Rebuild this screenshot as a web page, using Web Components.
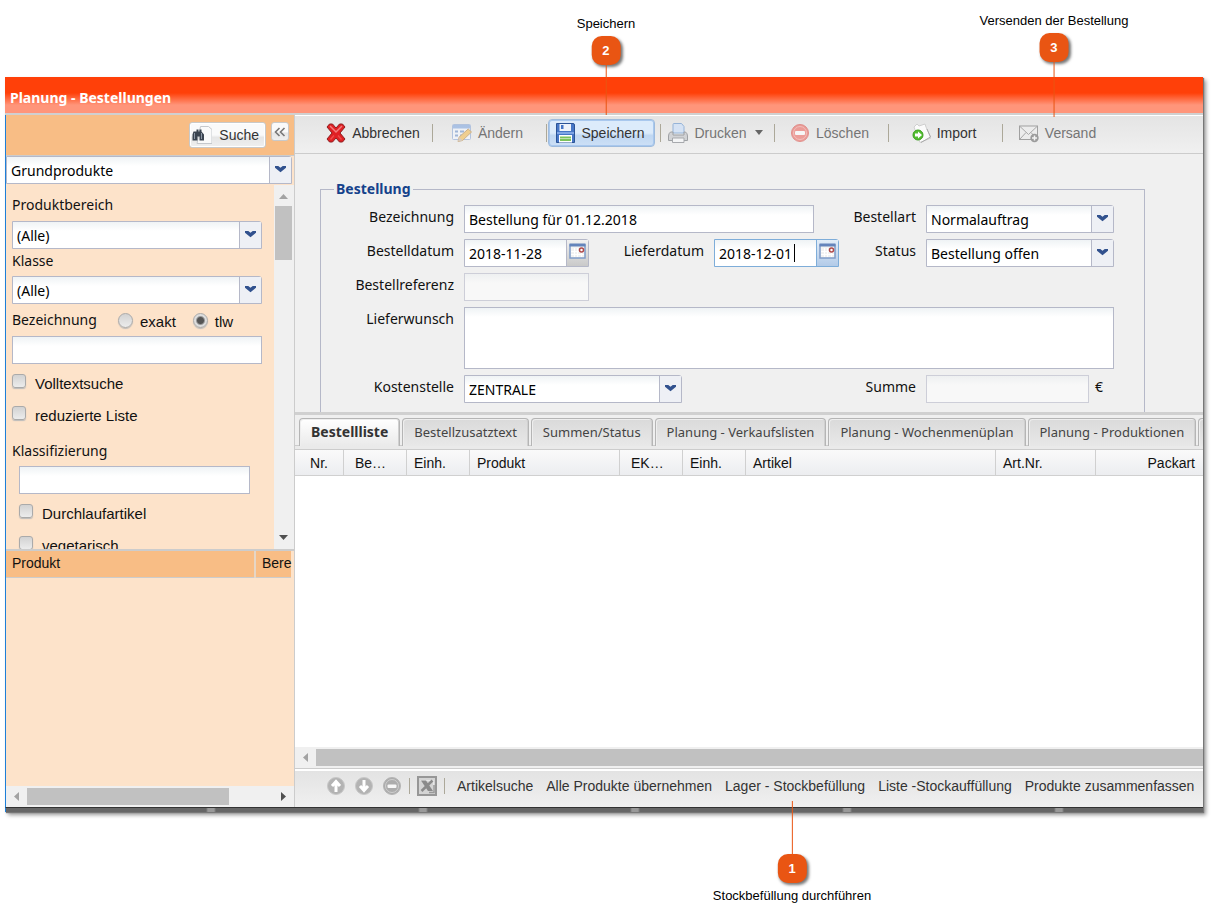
<!DOCTYPE html>
<html lang="de">
<head>
<meta charset="utf-8">
<title>Planung - Bestellungen</title>
<style>
body { margin: 0; background: #fff; font: 14px/20px "Liberation Sans", Arial, sans-serif; color: #111; }
</style>
</head>
<body>
<order-page></order-page>
<script>
const UI = '"Noto Sans", Tahoma, sans-serif';

const base = `
  *, *::before, *::after { box-sizing: border-box; }
  button { font: inherit; color: inherit; cursor: pointer; }
`;

const fields = `
  input[type=text], textarea, .combo, .date {
    width: 100%; height: 28px; margin: 0; border: 1px solid #b5b8c8; border-radius: 0; outline: 0;
    background: linear-gradient(#eff3f5, #fff 9px); color: #000; font: 14px/20px ${UI};
  }
  input[type=text], textarea { padding: 0 4px; display: block; resize: none; }
  input:disabled { border-color: #cdced8; background: linear-gradient(#eef0f1, #f8f8f8 9px); }
  .combo, .date { display: grid; grid-template-columns: 1fr 22px; border-top-right-radius: 3px; }
  .combo select {
    grid-area: 1 / 1 / 2 / 3; width: 100%; height: 26px; appearance: none; border: 0; outline: 0;
    background: none; margin: 0; padding: 1px 22px 0 4px; color: #000; font: inherit;
  }
  .combo svg, .date button {
    grid-area: 1 / 2; width: 22px; height: 26px; border-left: 1px solid #b5b8c8; background: #eef0f5;
    pointer-events: none;
  }
  .date { position: relative; }
  .date input[type=text] { border: 0; height: 26px; background: none; grid-area: 1 / 1; min-width: 0; }
  .date button { padding: 0; border-width: 0 0 0 1px; border-style: solid; background: linear-gradient(#f1f1f1, #c9c9c9); pointer-events: auto; }
  .date button svg { display: block; }
  .date.active, .date.active button { border-color: #7eadd9; }
  .date.active button { background: linear-gradient(#e2edf8, #b3cbe8); }
  .date.active::after { content: ""; position: absolute; left: 79px; top: 4px; width: 1px; height: 18px; background: #000; }
`;

const chevron = `<svg viewBox="0 0 21 26" aria-hidden="true"><path d="M5 9h3.300L10.500 10.800l2.200-1.800H16v1.700L10.500 15.300 5 10.700z" fill="#31518e"/></svg>`;
const combo = (id, value) => `<span class="combo"><select id="${id}"><option>${value}</option></select>${chevron}</span>`;
const calendar = `<svg width="21" height="26" viewBox="0 0 21 26" aria-hidden="true"><rect x="3" y="5" width="15" height="13" fill="#f2f2f2" stroke="#7f9cc9" stroke-width="1.5"/><path d="M2.500 3.500h16v3h-16z" fill="#6484bb"/><path d="M7.500 8v9M10.500 8v9M14.500 8v9M4 11.500h13M4 14.500h13" stroke="#fff"/><circle cx="14.500" cy="10" r="2" fill="#fff" stroke="#b04848" stroke-width="1.500"/></svg>`;

const icons = {
  cancel: `<path d="M3.500 1h3L10 5 13.500 1h3l2.500 3-5 6 5 6-2.500 3h-3L10 15 6.500 19h-3L1 16l5-6-5-6z" fill="#e02024" stroke="#8d2022"/><path d="M4 3l6 6 6-6" stroke="#f47c7c" stroke-width="1.500" fill="none"/><path d="M4.500 16.500L8 12.500M15.500 16.500L12 12.500" stroke="#ee4a4a" stroke-width="1.500"/>`,
  edit: `<g opacity=".6"><rect x=".5" y="1.500" width="18" height="15" rx="1" fill="#f4f8ff" stroke="#8fabd8"/><path d="M1 2h17v3.500H1z" fill="#83a9e2"/><path d="M3 8.500h3M3 12.500h3M8 8.500h4M8 12.500h3" stroke="#6f93cc" stroke-width="2"/><path d="M6 18.500l1.200-4.500 9-8 3.300 3-9 8.500z" fill="#f3bd55" stroke="#b98c4c"/><path d="M6 18.500l1.200-4.500 3.300 3.500z" fill="#c8b8a8"/></g>`,
  save: `<path d="M1.500.500h16.500q1.500 0 1.500 1.500v17.500h-18z" fill="#4676c6" stroke="#2b5396"/><rect x="4.500" y="1" width="11.500" height="7" fill="#eef3fa"/><rect x="6" y="2" width="2.500" height="4" fill="#4676c6"/><rect x="2" y="9" width="17" height="2" fill="#7fa5e4"/><rect x="4" y="12" width="13" height="7.500" fill="#fff"/><path d="M5 14.500h11M5 17h11" stroke="#7cc35c" stroke-width="1.800"/>`,
  print: `<g opacity=".75"><path d="M5 10V1.500Q5 .500 6 .500h7.500L16 3.500V10z" fill="#cfe1f8" stroke="#7ba2d3"/><path d="M2.500 9h2.500v3h11V9h1.500q2 1.500 2 4v4.500h-19V13q0-2.500 2-4z" fill="#c9cbce" stroke="#85888d"/><path d="M4.500 15h11.500v4.500H4.500z" fill="#f6f7f9" stroke="#909398"/></g>`,
  remove: `<g opacity=".6"><circle cx="10" cy="10" r="8.500" fill="#ee6a63" stroke="#d9544e"/><circle cx="10" cy="10" r="6.500" fill="none" stroke="#f6a29c"/><rect x="5" y="8" width="10" height="4" rx="1" fill="#fff"/></g>`,
  importing: `<path d="M3 4l3-3 2 2 6-2 1 3 5 11-11 4.500z" fill="#fbfbfb" stroke="#cfcfcf"/><path d="M16 6l3.500 8-9.500 5.500" fill="none" stroke="#a9a9a9"/><circle cx="7" cy="12" r="5" fill="#53bf30" stroke="#3b9e1e"/><path d="M4 10.500h3v-2l4 3.500-4 3.500v-2H4z" fill="#fff"/>`,
  mail: `<rect x=".5" y="3" width="18" height="13.500" fill="#ececec" stroke="#a0a0a0"/><path d="M1 3.500l8.500 8 8.500-8M1 16l6-6.500M18 16l-6-6.500" fill="none" stroke="#a8a8a8"/><circle cx="15.500" cy="15" r="4.200" fill="#9b9b9b"/><path d="M15.500 12.500v5M13 15h5" stroke="#f2f2f2" stroke-width="1.500"/>`,
  up: `<circle cx="10" cy="10" r="8.500" fill="#b3b3b3" stroke="#c8c8c8"/><path d="M10 16V6M6 10l4-4.500 4 4.500" fill="none" stroke="#fff" stroke-width="3"/>`,
  down: `<circle cx="10" cy="10" r="8.500" fill="#b3b3b3" stroke="#c8c8c8"/><path d="M10 4V14M6 10l4 4.500 4-4.500" fill="none" stroke="#fff" stroke-width="3"/>`,
  minus: `<circle cx="10" cy="10" r="8.500" fill="#acacac" stroke="#b5b5b5"/><circle cx="10" cy="10" r="6.500" fill="none" stroke="#cfcfcf"/><rect x="5.500" y="8.500" width="9" height="3.500" rx="1" fill="#f7f7f7"/>`,
  excel: `<rect x="1" y="1" width="18" height="18" fill="#d4d4d4" stroke="#979797" stroke-width="2"/><path d="M3.500 4.500h13v11.500" fill="none" stroke="#e8e8e8"/><path d="M4 4.500h5l7 10.500h-5z" fill="#8a8a8a"/><path d="M15.500 4.500L4.500 15" stroke="#8a8a8a" stroke-width="2.500"/><path d="M12 16.500h5V9" fill="none" stroke="#999" stroke-width="1.500"/>`,
  find: `<path d="M8.500 1.500h8l3.500 3v14H5z" fill="#fafafa" stroke="#c5c8cc"/><path d="M1.500 6.500h3V4.500h2v2h1v-2h2v2l2.500 3v6H7.500v-4h-2v4H.500v-6z" fill="#3b4450"/><path d="M2.500 8v6M9.500 8v6" stroke="#8d97a5"/>`
};

function define(name, render) {
  customElements.define(name, class extends HTMLElement {
    constructor() { super(); this.attachShadow({ mode: 'open' }); }
    connectedCallback() {
      const t = document.createElement('template');
      t.innerHTML = render(this);
      this.shadowRoot.replaceChildren(t.content.cloneNode(true));
    }
  });
}

define('ui-icon', el => `<style>
  :host { display: block; flex: none; width: 20px; height: 20px; }
  svg { display: block; width: 100%; height: 100%; }
</style><svg viewBox="0 0 20 20" aria-hidden="true">${icons[el.getAttribute('name')]}</svg>`);

define('tool-button', el => `<style>${base}
  :host { display: block; color: #333; }
  :host([muted]) { color: #757575; }
  button { display: flex; align-items: center; gap: 6px; height: 28px; padding: 0; border: 1px solid transparent; border-radius: 4px; background: none; white-space: nowrap; }
  :host([active]) button { padding: 0 9px 0 6px; border-color: #9ebbdd; box-shadow: inset 0 0 0 1px #a9c8ee; background: linear-gradient(#dcebfb 50%, #c0d7f2 60%, #cde0f6); }
  .caret { border: 4px solid transparent; border-top: 5px solid #666; border-bottom: 0; margin-left: 2px; }
</style><button type="button"${el.hasAttribute('only') ? ` aria-label="${el.getAttribute('only')}"` : ''}>
  ${el.hasAttribute('icon') ? `<ui-icon name="${el.getAttribute('icon')}"></ui-icon>` : ''}<slot></slot>${el.hasAttribute('menu') ? '<span class="caret"></span>' : ''}</button>`);

define('scroll-strip', el => `<style>${base}
  :host { display: flex; align-items: center; box-sizing: border-box; background: #f0f0f0; height: 21px; padding: 2px 0; }
  :host([vertical]) { flex-direction: column; height: auto; padding: 0 2px 0 1px; }
  .arrow { flex: none; width: 21px; height: 17px; display: block; }
  :host([vertical]) .arrow { width: 17px; height: 21px; }
  .track { flex: 1; align-self: stretch; }
  .thumb { background: #c1c1c1; width: var(--thumb, 100%); height: 100%; }
  :host([vertical]) .thumb { width: 100%; height: 54px; }
</style>${el.hasAttribute('vertical')
  ? `<svg class="arrow" viewBox="0 0 17 21"><path d="M4 14l4.500-5L13 14z" fill="#a3a3a3"/></svg><div class="track"><div class="thumb"></div></div><svg class="arrow" viewBox="0 0 17 21"><path d="M4 7l4.500 5L13 7z" fill="#505050"/></svg>`
  : `<svg class="arrow" viewBox="0 0 21 17"><path d="M13 4L8 8.500l5 4.500z" fill="#a3a3a3"/></svg><div class="track"><div class="thumb"></div></div>${el.hasAttribute('end') ? `<svg class="arrow" viewBox="0 0 21 17"><path d="M8 4l5 4.500L8 13z" fill="#505050"/></svg>` : ''}`}`);

define('search-panel', () => `<style>${base}${fields}
  :host { display: grid; grid-template-rows: 41px 29px 366px 1fr auto; min-width: 0; background: #fde3ca; border-left: 1px solid #1d7fd8; border-right: 1px solid #ccc; }
  header { display: flex; justify-content: flex-end; align-items: flex-start; gap: 5px; padding: 7px 5px 0 0; background: #f8bd85; border-bottom: 1px solid #ccc; }
  header button { border: 1px solid #c9c9c9; background: linear-gradient(#fafafa 50%, #e6e6e6 60%, #efefef); border-radius: 3px; padding: 0; }
  .find { display: flex; align-items: center; gap: 7px; height: 26px; padding: 0 6px 0 2px; color: #333; box-shadow: inset 0 0 0 1px #fff; }
  .fold { width: 18px; height: 19px; display: grid; place-items: center; }
  .top { padding-right: 2px; }
  .scroll { display: grid; grid-template-columns: 1fr 20px; min-height: 0; border-bottom: 2px solid #ccc; }
  form { overflow: hidden; padding: 10px 12px 0 6px; font: 14px/20px ${UI}; }
  form > label { display: block; margin: 0 0 6px; }
  form > .combo + label { margin: 2px 0 5px; }
  form > .choice + label { margin: 11px 0 5px; }
  .choice { display: flex; align-items: center; height: 32px; }
  .choice label { font: 15px/20px "Liberation Sans", Arial, sans-serif; }
  .choice input { appearance: none; flex: none; width: 14px; height: 14px; margin: 0; border: 1px solid #aaa; border-radius: 3px; background: linear-gradient(#d2d2d2, #ececec); box-shadow: 0 1px 1px #bbb; }
  .check { gap: 9px; padding-top: 3px; }
  .check input { align-self: flex-start; margin-top: 5px; }
  input[type=text] + .check { margin-top: 2px; }
  .indent { padding: 0 12px 0 7px; }
  .radios > span { flex: 0 0 106px; }
  .radios label { margin: 0 17px 0 7px; padding-top: 3px; }
  .radios input { width: 15px; height: 15px; border-radius: 50%; }
  .radios input:checked { background: radial-gradient(#555 0 3px, #ddd 5px); }
  .list { min-height: 0; padding-right: 3px; overflow: hidden; }
  table { width: 100%; border-collapse: collapse; table-layout: fixed; }
  th { font-weight: 400; text-align: left; height: 26px; padding: 0 0 2px 6px; background: #f8bd85; border-bottom: 1px solid #ccc; color: #111; }
  th + th { border-left: 2px solid #e6d6c6; width: 36px; }
</style>
<header>
  <button class="find" type="button"><ui-icon name="find"></ui-icon>Suche</button>
  <button class="fold" type="button" aria-label="Einklappen"><svg width="12" height="10" viewBox="0 0 12 10"><path d="M5.500 1L1.500 5l4 4M10.500 1l-4 4 4 4" fill="none" stroke="#777" stroke-width="1.600"/></svg></button>
</header>
<div class="top">${combo('kind', 'Grundprodukte')}</div>
<div class="scroll">
  <form>
    <label for="area">Produktbereich</label>${combo('area', '(Alle)')}
    <label for="class">Klasse</label>${combo('class', '(Alle)')}
    <div class="choice radios"><span>Bezeichnung</span>
      <input type="radio" name="m" id="m1"><label for="m1">exakt</label>
      <input type="radio" name="m" id="m2" checked><label for="m2">tlw</label></div>
    <input type="text" aria-label="Bezeichnung">
    <div class="choice check"><input type="checkbox" id="c1"><label for="c1">Volltextsuche</label></div>
    <div class="choice check"><input type="checkbox" id="c2"><label for="c2">reduzierte Liste</label></div>
    <label for="klass">Klassifizierung</label>
    <div class="indent"><input type="text" id="klass">
      <div class="choice check"><input type="checkbox" id="c3"><label for="c3">Durchlaufartikel</label></div>
      <div class="choice check"><input type="checkbox" id="c4"><label for="c4">vegetarisch</label></div></div>
  </form>
  <scroll-strip vertical></scroll-strip>
</div>
<div class="list"><table><thead><tr><th>Produkt</th><th>Bere</th></tr></thead></table></div>
<scroll-strip end style="--thumb:82%"></scroll-strip>`);

define('order-toolbar', () => `<style>
  :host { display: grid; grid-template-columns: 23px repeat(7, 114px); align-items: center; box-sizing: border-box; height: 39px; padding-bottom: 4px; background: linear-gradient(#e4e4e4, #f0f0f0); border-bottom: 1px solid #ccc; border-top: 1px solid #fff; }
  div { display: flex; justify-content: center; align-items: center; box-sizing: border-box; height: 28px; padding-right: 4px; }
  div + div { border-left: 1px solid transparent; border-image: linear-gradient(transparent 6px, #aca899 6px 22px, transparent 22px) 1; }
</style><span></span>
<div><tool-button icon="cancel">Abbrechen</tool-button></div>
<div><tool-button icon="edit" muted>Ändern</tool-button></div>
<div><tool-button icon="save" active>Speichern</tool-button></div>
<div><tool-button icon="print" muted menu>Drucken</tool-button></div>
<div><tool-button icon="remove" muted>Löschen</tool-button></div>
<div><tool-button icon="importing">Import</tool-button></div>
<div><tool-button icon="mail" muted>Versand</tool-button></div>`);

define('order-form', () => `<style>${base}${fields}
  :host { display: block; box-sizing: border-box; height: 258px; overflow: hidden; background: #f0f0f0; padding: 25px 58px 0 25px; font: 14px/20px ${UI}; color: #111; }
  fieldset { margin: 0; border: 1px solid #b5b8c8; padding: 0 30px 20px 0; min-height: 260px; }
  legend { margin-left: 13px; padding: 0 2px; font-weight: 700; color: #15428b; }
  .grid { display: grid; grid-template-columns: 133px 125px 105px 125px 67px 1fr; gap: 6px 10px; padding-top: 6px; }
  .grid > label { text-align: right; line-height: 24px; }
  .wide { grid-column: span 3; width: 350px; }
  textarea { height: 62px; }
  .rest { grid-column: 2 / -1; }
  .cost { grid-column: 2 / 5; width: 218px; }
  .row3 { grid-column: 2 / -1; width: 125px; }
  .sum { display: flex; gap: 6px; line-height: 24px; }
  .sum input { flex: 0 1 163px; width: 0; }
</style>
<fieldset><legend>Bestellung</legend><div class="grid">
  <label for="name">Bezeichnung</label><div class="wide"><input type="text" id="name" value="Bestellung für 01.12.2018"></div>
  <label for="kind">Bestellart</label>${combo('kind', 'Normalauftrag')}
  <label for="ordered">Bestelldatum</label><span class="date"><input type="text" id="ordered" value="2018-11-28"><button type="button" aria-label="Kalender">${calendar}</button></span>
  <label for="delivery">Lieferdatum</label><span class="date active"><input type="text" id="delivery" value="2018-12-01"><button type="button" aria-label="Kalender">${calendar}</button></span>
  <label for="state">Status</label>${combo('state', 'Bestellung offen')}
  <label for="ref">Bestellreferenz</label><div class="row3"><input type="text" id="ref" disabled></div>
  <label for="wish">Lieferwunsch</label><div class="rest"><textarea id="wish"></textarea></div>
  <label for="cost">Kostenstelle</label><div class="cost">${combo('cost', 'ZENTRALE')}</div>
  <label for="sum">Summe</label><div class="sum"><input type="text" id="sum" disabled><span>€</span></div>
</div></fieldset>`);

define('order-tabs', () => `<style>${base}
  :host { display: flex; gap: 2px; box-sizing: border-box; height: 38px; padding: 3px 0 0 4px; overflow: hidden; border-top: 3px solid #d0d0d0; border-bottom: 1px solid #ccc; background: linear-gradient(#efefef 30px, #ccc 30px 31px, #eaeaea 31px); }
  button { flex: none; height: 28px; padding: 0 11px 2px; border: 1px solid #b5b5b5; border-bottom: 0; border-radius: 4px 4px 0 0; background: linear-gradient(#dadada, #e8e8e8); box-shadow: inset 1px 1px #eee, inset -1px 0 #d0d0d0; font: 13px/20px ${UI}; color: #444; white-space: nowrap; }
  button[aria-selected=true] { background: linear-gradient(#fff, #eaeaea); font-weight: 700; font-size: 14px; color: #333; }
  .more { width: 80px; }
</style>
<button role="tab" aria-selected="true">Bestellliste</button><button role="tab">Bestellzusatztext</button><button role="tab">Summen/Status</button><button role="tab">Planung - Verkaufslisten</button><button role="tab">Planung - Wochenmenüplan</button><button role="tab">Planung - Produktionen</button><button role="tab" class="more" aria-label="Weitere"></button>`);

define('order-table', () => `<style>${base}
  :host { display: block; background: #fff; overflow: hidden; min-height: 0; }
  table { width: 100%; border-collapse: separate; border-spacing: 0; table-layout: fixed; }
  th { height: 26px; padding: 0 7px; font-weight: 400; text-align: left; color: #111; background: linear-gradient(#fafafa, #ecedf0); border-right: 1px solid #d0d0d0; border-bottom: 1px solid #d0d0d0; white-space: nowrap; }
  th.mid { text-align: center; }
  th.num { padding-left: 11px; }
  th:last-child { text-align: right; border-right: 0; padding-right: 8px; }
</style>
<table><colgroup><col style="width:49px"><col style="width:63px"><col style="width:63px"><col style="width:150px"><col style="width:63px"><col style="width:63px"><col style="width:250px"><col style="width:100px"><col></colgroup>
<thead><tr><th class="mid">Nr.</th><th class="num">Be…</th><th>Einh.</th><th>Produkt</th><th class="num">EK…</th><th>Einh.</th><th>Artikel</th><th>Art.Nr.</th><th>Packart</th></tr></thead></table>`);

define('order-footer', () => `<style>
  :host { display: flex; align-items: center; gap: 11px; box-sizing: border-box; height: 39px; padding: 0 0 4px 30px; overflow: hidden; border-top: 1px solid #ccc; background: linear-gradient(#fff 2px, #e3e3e3 2px, #f0f0f0); }
  div { display: flex; align-items: center; gap: 6px; }
  i { width: 1px; height: 16px; background: #aca899; }
</style>
<div><tool-button icon="up" only="Nach oben"></tool-button><tool-button icon="down" only="Nach unten"></tool-button><tool-button icon="minus" only="Entfernen"></tool-button><i></i><tool-button icon="excel" only="Excel"></tool-button><i></i></div>
<tool-button>Artikelsuche</tool-button><tool-button>Alle Produkte übernehmen</tool-button><tool-button>Lager - Stockbefüllung</tool-button><tool-button>Liste -Stockauffüllung</tool-button><tool-button>Produkte zusammenfassen</tool-button>`);

define('order-window', () => `<style>${base}
  :host { display: flex; flex-direction: column; min-height: 0; box-shadow: 1px 1px 1px #777, 3px 3px 4px #999; background: #f0f0f0; }
  h1 { margin: 0; height: 38px; padding: 11px 5px 0; font: 700 14px/20px ${UI}; color: #fff; background: linear-gradient(#ff4009 16px, #ff957a 28px); border-bottom: 2px solid #d0d0d0; }
  .split { flex: 1; min-height: 0; display: grid; grid-template-columns: 290px minmax(0, 1fr); }
  main { display: grid; grid-template-rows: auto auto auto 1fr auto auto; min-height: 0; }
  .edge { height: 5px; border-top: 1px solid #333; border-left: 1px solid #1d7fd8; background: repeating-linear-gradient(90deg, transparent 0 200px, #999 202px 208px, transparent 210px 212px), #666; }
</style>
<h1>Planung - Bestellungen</h1>
<div class="split"><search-panel></search-panel>
<main><order-toolbar></order-toolbar><order-form></order-form><order-tabs></order-tabs><order-table></order-table><scroll-strip></scroll-strip><order-footer></order-footer></main></div>
<div class="edge"></div>`);

define('call-out', el => `<style>
  :host { position: absolute; display: flex; flex-direction: column; align-items: center; transform: translateX(-50%); font-size: 13px; line-height: 16px; color: #000; white-space: nowrap; pointer-events: none; }
  :host([below]) { flex-direction: column-reverse; }
  span { display: grid; place-items: center; width: 29px; height: 29px; margin-top: 4px; border-radius: 10px; background: #e95513; color: #fff; font-weight: 700; box-shadow: 2px 2px 3px #777; }
  :host([below]) span { margin: 0 0 5px; }
  i { width: 1px; height: var(--line, 50px); background: #e95513; }
</style><slot></slot><span>${el.getAttribute('number')}</span><i></i>`);

define('order-page', () => `<style>
  :host { position: relative; display: grid; grid-template-rows: minmax(0, 1fr); box-sizing: border-box; height: 100vh; min-height: 860px; padding: 77px 9px 107px 5px; overflow: hidden; }
</style>
<order-window></order-window>
<call-out number="2" style="left:606px;top:16px">Speichern</call-out>
<call-out number="3" style="left:1054px;top:13px;--line:55px">Versenden der Bestellung</call-out>
<call-out number="1" below style="left:792px;bottom:15px;--line:53px">Stockbefüllung durchführen</call-out>`);
</script>
</body>
</html>
